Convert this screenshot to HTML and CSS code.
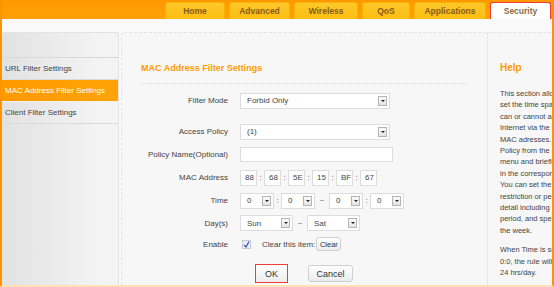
FILE: index.html
```html
<!DOCTYPE html>
<html lang="en">
<head>
  <meta charset="UTF-8" />
  <title>MAC Address Filter</title>
  <link rel="stylesheet" href="styles.css">
</head>
<body>
  <div class="page">
    <div class="topbar">
      <ul class="tabs">
        <li class="tab">Home</li>
        <li class="tab">Advanced</li>
        <li class="tab">Wireless</li>
        <li class="tab">QoS</li>
        <li class="tab">Applications</li>
        <li class="tab active">Security</li>
      </ul>
    </div>
    <div class="strip"></div>

    <div class="content">
      <div class="sidebar">
        <div class="side-head"></div>
        <div class="side-item">URL Filter Settings</div>
        <div class="side-item current">MAC Address Filter Settings</div>
        <div class="side-item">Client Filter Settings</div>
      </div>

      <div class="panel">
        <div class="main">
          <h2 class="title">MAC Address Filter Settings</h2>
          <div class="form">
            <div class="row first">
              <label>Filter Mode</label>
              <div class="select wide"><span>Forbid Only</span><i class="arrow"></i></div>
            </div>
            <div class="row">
              <label>Access Policy</label>
              <div class="select wide"><span>(1)</span><i class="arrow"></i></div>
            </div>
            <div class="row">
              <label>Policy Name(Optional)</label>
              <div class="input name"></div>
            </div>
            <div class="row">
              <label>MAC Address</label>
              <div class="group">
                <div class="input mac">88</div><span class="sep">:</span>
                <div class="input mac">68</div><span class="sep">:</span>
                <div class="input mac">5E</div><span class="sep">:</span>
                <div class="input mac">15</div><span class="sep">:</span>
                <div class="input mac">BF</div><span class="sep">:</span>
                <div class="input mac">67</div>
              </div>
            </div>
            <div class="row">
              <label>Time</label>
              <div class="group">
                <div class="select time"><span>0</span><i class="arrow"></i></div><span class="sep">:</span>
                <div class="select time"><span>0</span><i class="arrow"></i></div><span class="sep tilde">~</span>
                <div class="select time"><span>0</span><i class="arrow"></i></div><span class="sep">:</span>
                <div class="select time"><span>0</span><i class="arrow"></i></div>
              </div>
            </div>
            <div class="row short">
              <label>Day(s)</label>
              <div class="group">
                <div class="select day"><span>Sun</span><i class="arrow"></i></div><span class="sep tilde">~</span>
                <div class="select day"><span>Sat</span><i class="arrow"></i></div>
              </div>
            </div>
            <div class="row shorter">
              <label>Enable</label>
              <div class="group">
                <span class="check">
                  <svg width="7" height="7" viewBox="0 0 7 7"><path d="M1 4 L3 6 L6 0.5" fill="none" stroke="#3b55b8" stroke-width="1.3"/></svg>
                </span>
                <span class="clear-text">Clear this item:</span>
                <button class="btn small">Clear</button>
              </div>
            </div>
          </div>
          <div class="actions">
            <button class="btn ok">OK</button>
            <button class="btn cancel">Cancel</button>
          </div>
        </div>

        <div class="help">
          <h3>Help</h3>
          <p>This section allows you to<br>set the time span in which users<br>can or cannot access the<br>Internet via the specified<br>MAC adresses. Select a<br>Policy from the drop-down<br>menu and briefly describe it<br>in the corresponding field.<br>You can set the type of<br>restriction or permission in<br>detail including MAC, time<br>period, and specified days of<br>the week.</p>
          <p>When Time is set to 0:0 ~<br>0:0, the rule will be applied<br>24 hrs/day.</p>
        </div>
      </div>
    </div>
  </div>
</body>
</html>
```

FILE: styles.css
```css
body {
  margin: 0;
  font-family: 'Liberation Sans', Arial, sans-serif;
  color: #333;
  background: #fff;
}
.page {
  width: 554px;
  height: 287px;
  overflow: hidden;
  box-sizing: border-box;
  border-left: 2px solid #ff9400;
  border-right: 2px solid #ff9400;
  border-bottom: 2px solid #ffe2b8;
  background: #fafafa;
  display: flex;
  flex-direction: column;
}
.topbar {
  height: 19px;
  flex: none;
  background: linear-gradient(#ff9800, #ffa10a);
  margin: 0 -2px;
}
.tabs {
  list-style: none;
  margin: 0;
  padding: 2px 0 0 165px;
  display: flex;
  gap: 4px;
  height: 17px;
}
.tab {
  height: 17px;
  box-sizing: border-box;
  background: linear-gradient(#fdc82a, #fbbd12);
  border: 1px solid #f5b400;
  border-bottom: none;
  border-radius: 3px 3px 0 0;
  color: #8a5b18;
  font-weight: bold;
  font-size: 8.5px;
  line-height: 16px;
  text-align: center;
}
.tab:nth-child(1) { width: 60px; }
.tab:nth-child(2) { width: 61px; }
.tab:nth-child(3) { width: 64px; }
.tab:nth-child(4) { width: 48px; }
.tab:nth-child(5) { width: 72px; }
.tab.active {
  width: 61px;
  background: #fff;
  border: 1px solid #ee3b3b;
  border-bottom: none;
  color: #8a6a4a;
}
.strip {
  height: 12px;
  flex: none;
  background: #f9f9f9;
  border-bottom: 1px solid #fbfbfb;
}
.content {
  flex: 1;
  display: flex;
  gap: 2px;
  min-height: 0;
}
.sidebar {
  width: 117px;
  flex: none;
  background: linear-gradient(90deg, #e2e2e2, #f3f3f3 80%, #f4f4f4);
  border: 1px solid #e3e3e3;
  border-bottom: none;
  border-radius: 3px 3px 0 0;
  box-sizing: border-box;
}
.side-head {
  height: 24px;
  border-bottom: 1px solid #d8d8d8;
}
.side-item {
  height: 21px;
  line-height: 21px;
  font-size: 8px;
  color: #444;
  padding-left: 2px;
  border-bottom: 1px solid #dadada;
  white-space: nowrap;
}
.side-item.current {
  background: linear-gradient(90deg, #ff9a00, #ffa306);
  color: #fff;
  border-bottom-color: #f2f2f2;
  margin-left: -2px;
  padding-left: 4px;
}
.panel {
  flex: 1;
  display: flex;
  background: #f7f7f7;
  border: 1px dashed #e2e2e2;
  border-bottom: none;
  border-radius: 3px 3px 0 0;
}
.main {
  width: 365px;
  flex: none;
}
.title {
  margin: 29px 19px 0;
  padding-bottom: 9px;
  border-bottom: 1px dotted #d5d5d5;
  font-size: 9px;
  color: #ff9c00;
  line-height: 12px;
}
.form {
  display: flex;
  flex-direction: column;
  margin-top: 5px;
}
.row {
  display: flex;
  align-items: center;
  height: 23px;
  gap: 12px;
}
.row.first {
  margin-bottom: 8px;
}
.row.short { height: 22px; }
.row.shorter { height: 20px; }
.row label {
  width: 106px;
  text-align: right;
  font-size: 8px;
  color: #444;
  white-space: nowrap;
}
.select, .input {
  height: 16px;
  box-sizing: border-box;
  background: #fff;
  border: 1px solid #dcdcdc;
  font-size: 8px;
  color: #444;
  display: flex;
  align-items: center;
  justify-content: space-between;
  padding: 0 2px 0 6px;
}
.select.wide { width: 150px; }
.input.name { width: 153px; height: 15px; }
.input.mac { width: 17px; padding: 0 0 0 4px; }
.select.time { width: 34px; }
.select.day { width: 53px; }
.arrow {
  width: 9px;
  height: 10px;
  box-sizing: border-box;
  border: 1px solid #b5b5b5;
  background: linear-gradient(#fafafa, #e4e4e4);
  position: relative;
}
.arrow::after {
  content: "";
  position: absolute;
  left: 2px;
  top: 3px;
  border-left: 2px solid transparent;
  border-right: 2px solid transparent;
  border-top: 2px solid #222;
}
.group {
  display: flex;
  align-items: center;
}
.sep {
  width: 7px;
  text-align: center;
  font-size: 8px;
  color: #666;
}
.sep.tilde { width: 14px; }
.check {
  width: 9px;
  height: 9px;
  box-sizing: border-box;
  border: 1px solid #c8c8d8;
  background: #eef0fa;
  margin-left: 2px;
  display: flex;
  align-items: center;
  justify-content: center;
}
.clear-text {
  font-size: 8px;
  color: #444;
  margin-left: 11px;
}
.btn {
  font-family: 'Liberation Sans', Arial, sans-serif;
  background: linear-gradient(#ffffff, #ececec);
  border: 1px solid #cfcfcf;
  border-radius: 3px;
  color: #333;
  padding: 0;
}
.btn.small {
  width: 25px;
  height: 14px;
  font-size: 7.5px;
  margin-left: 1px;
}
.actions {
  display: flex;
  align-items: center;
  margin-top: 10px;
  padding-left: 133px;
  gap: 20px;
}
.btn.ok {
  width: 33px;
  height: 19px;
  border: 1px solid #ee3b3b;
  border-radius: 0;
  font-size: 9px;
}
.btn.cancel {
  width: 45px;
  height: 17px;
  font-size: 9px;
}
.help {
  flex: none;
  width: 120px;
  border-left: 1px dotted #dcdcdc;
  padding-left: 12px;
}
.help h3 {
  margin: 29px 0 0;
  font-size: 10px;
  color: #ff9c00;
  line-height: 12px;
}
.help p {
  margin: 14px 0 0;
  font-size: 7.5px;
  line-height: 11.4px;
  color: #444;
  white-space: nowrap;
}
.help p + p {
  margin-top: 8px;
}
```
